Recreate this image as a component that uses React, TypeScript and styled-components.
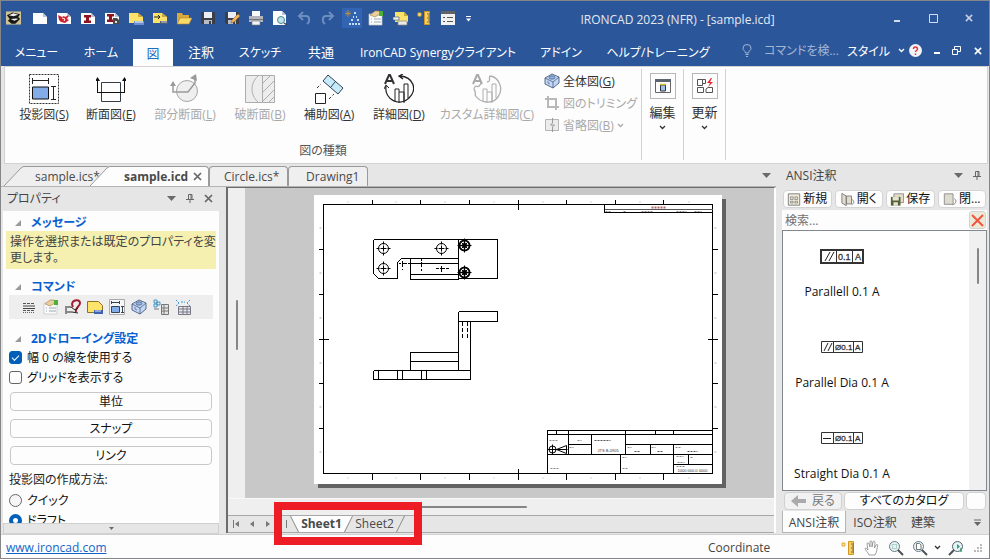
import React from "react";
import styled, { createGlobalStyle } from "styled-components";

const Global = createGlobalStyle`
  * { box-sizing: border-box; }
  body { margin: 0; }
  body, button, input {
    font-family: "Open Sans", "Noto Sans CJK JP", sans-serif;
    font-size: 12px;
    font-feature-settings: "palt";
    color: #333;
  }
  button { background: none; border: 0; padding: 0; margin: 0; white-space: nowrap; }
  svg { display: block; flex: none; }
`;

/* ---------- shell ---------- */

const Shell = styled.div`
  display: flex;
  flex-direction: column;
  height: 100vh;
  overflow: hidden;
  border: 1px solid #84868a;
  background: #e6e6e6;
`;
const TitleBar = styled.header`
  display: flex;
  align-items: center;
  height: 34px;
  flex: none;
  padding-right: 2px;
  background: #2b579a;
`;
const QuickButton = styled.button<{ $active?: boolean }>`
  display: flex;
  align-items: center;
  justify-content: center;
  width: 20px;
  height: 20px;
  margin: 0 2px;
  flex: none;
  background: ${(p) => (p.$active ? "#3165b4" : "none")};
`;
const AppLogo = styled.div`
  padding-left: 5px;
  width: 27px;
  flex: none;
`;
const WindowTitle = styled.h1`
  flex: 1;
  min-width: 0;
  margin: 0;
  padding-top: 3px;
  text-align: center;
  font-size: 12px;
  font-weight: 400;
  color: #e4e9f2;
  white-space: nowrap;
`;
const WindowButton = styled.button<{ $w: number }>`
  display: flex;
  justify-content: center;
  align-items: center;
  align-self: center;
  width: ${(p) => p.$w}px;
  height: 24px;
  flex: none;
`;
const MenuBar = styled.nav`
  display: flex;
  align-items: stretch;
  height: 31px;
  flex: none;
  padding-left: 3px;
  background: #2b579a;
`;
const MenuItem = styled.button<{ $w: number; $active?: boolean }>`
  width: ${(p) => p.$w}px;
  flex: none;
  height: ${(p) => (p.$active ? 27 : 25)}px;
  margin-top: 4px;
  font-size: 13px;
  color: ${(p) => (p.$active ? "#1c6cc0" : "#fff")};
  background: ${(p) => (p.$active ? "#fdfdfd" : "none")};
`;
const KanaItem = styled(MenuItem)`
  font-size: 12px;
`;
const MenuSpacer = styled.div`
  flex: 1;
`;
const CommandSearch = styled.label`
  display: flex;
  align-items: center;
  gap: 12px;
  width: 105px;
  flex: none;
`;
const CommandInput = styled.input`
  width: 80px;
  padding: 0;
  border: 0;
  background: none;
  font-size: 12px;
  &::placeholder { color: #a3b5d3; opacity: 1; }
`;
const StyleMenu = styled.button`
  display: flex;
  align-items: center;
  gap: 8px;
  width: 56px;
  flex: none;
  font-size: 12px;
  color: #fff;
`;

/* ---------- ribbon ---------- */

const Ribbon = styled.section`
  display: flex;
  height: 98px;
  flex: none;
  margin: 0 1px 0 3px;
  border: 1px solid #d2d2d2;
  background: #fdfdfd;
`;
const ViewGroup = styled.div`
  display: flex;
  flex-direction: column;
  width: 636px;
  flex: none;
`;
const GroupTools = styled.div`
  display: flex;
  padding: 7px 0 0 5px;
`;
const GroupLabel = styled.div`
  padding-top: 1px;
  text-align: center;
  font-size: 12px;
  line-height: 18px;
  color: #555;
`;
const BigTool = styled.button<{ $w: number }>`
  display: flex;
  flex-direction: column;
  align-items: center;
  gap: 2px;
  width: ${(p) => p.$w}px;
  height: 67px;
  flex: none;
  padding-top: 0;
  font-size: 12px;
  line-height: 18px;
  color: #333;
  &:disabled { color: #a9a9a9; }
`;
const SmallTools = styled.div`
  display: flex;
  flex-direction: column;
  margin: -4px 0 0 4px;
`;
const SmallTool = styled.button`
  display: flex;
  align-items: center;
  gap: 3px;
  height: 22px;
  font-size: 12px;
  color: #333;
  &:disabled { color: #a9a9a9; }
`;
const DropTool = styled.button`
  display: flex;
  flex-direction: column;
  align-items: center;
  width: 42px;
  flex: none;
  margin: 2px 0 3px;
  padding-top: 4px;
  gap: 4px;
  border-left: 1px solid #d2d2d2;
  font-size: 13px;
  line-height: 18px;
`;
const DropFace = styled.span`
  display: flex;
  align-items: center;
  justify-content: center;
  width: 26px;
  height: 26px;
  border: 1px solid #b8b8b8;
`;
const RibbonEnd = styled.div`
  margin: 2px 0 3px;
  border-left: 1px solid #d2d2d2;
`;

/* ---------- work area ---------- */

const Body = styled.main`
  display: flex;
  flex: 1;
  min-height: 0;
`;
const WorkArea = styled.div`
  display: flex;
  flex-direction: column;
  flex: 1;
  min-width: 0;
`;
const DocTabs = styled.div`
  display: flex;
  align-items: flex-end;
  height: 23px;
  flex: none;
  padding: 0 5px 0 3px;
  border-bottom: 1px solid #b4b4b4;
`;
const DocTab = styled.button<{ $w: number; $active?: boolean; $slant?: boolean }>`
  display: flex;
  align-items: center;
  justify-content: space-between;
  position: relative;
  width: ${(p) => p.$w}px;
  height: 20px;
  flex: none;
  margin-left: ${(p) => (p.$slant ? 20 : 0)}px;
  padding: 0 6px 0 ${(p) => (p.$slant && !p.$active ? 11 : 14)}px;
  border: 1px solid #9a9a9a;
  border-left-width: ${(p) => (p.$slant ? 0 : 1)}px;
  border-bottom: 0;
  border-radius: ${(p) => (p.$slant ? 0 : 4)}px 4px 0 0;
  background: ${(p) => (p.$active ? "#fdfdfd" : "#efefef")};
  font-weight: ${(p) => (p.$active ? 700 : 400)};
  color: #4a4a4a;
  & + & { margin-left: ${(p) => (p.$slant ? 2 : 0)}px; }
`;
const Slant = styled.svg`
  position: absolute;
  right: 100%;
  top: -1px;
`;
const TabsMenu = styled.button`
  margin-left: auto;
  align-self: center;
`;
const Panes = styled.div`
  display: flex;
  flex: 1;
  min-height: 0;
`;

/* ---------- properties ---------- */

const Properties = styled.aside`
  display: flex;
  flex-direction: column;
  width: 216px;
  flex: none;
  margin: 0 7px 0 2px;
`;
const PanelHead = styled.div`
  display: flex;
  align-items: center;
  gap: 10px;
  height: 24px;
  flex: none;
  padding: 0 6px 2px 4px;
`;
const PanelTitle = styled.h2`
  flex: 1;
  margin: 0;
  font-size: 12px;
  font-weight: 400;
  color: #444;
`;
const PropBody = styled.div`
  flex: 1;
  min-height: 0;
  overflow: hidden;
  background: #fdfdfd;
`;
const SectionHead = styled.h3<{ $gap: number }>`
  display: flex;
  align-items: center;
  gap: 9px;
  height: 20px;
  margin: ${(p) => p.$gap}px 0 0;
  padding: 3px 0 0 12px;
  font-size: 12px;
  line-height: 17px;
  font-weight: 700;
  color: #0a5fd0;
`;
const Message = styled.p`
  margin: 0 3px;
  height: 38px;
  padding: 3px 0 0 4px;
  line-height: 16px;
  white-space: nowrap;
  color: #444;
  background: #f5f0b0;
`;
const CommandStrip = styled.div`
  display: flex;
  align-items: center;
  height: 24px;
  margin: 0 6px;
  padding-left: 9px;
  background: #eee;
`;
const StripButton = styled.button`
  display: flex;
  justify-content: center;
  width: 22px;
`;
const Option = styled.label`
  display: flex;
  align-items: center;
  gap: 5px;
  height: 20px;
  padding-left: 6px;
  color: #111;
`;
const Check = styled.input`
  appearance: none;
  width: 13px;
  height: 13px;
  margin: 0;
  border: 1px solid #666;
  border-radius: 3px;
  background: #fdfdfd;
  &:checked {
    border-color: #005fb8;
    background: #005fb8;
  }
  &:checked::after {
    content: "";
    display: block;
    width: 6px;
    height: 3px;
    margin: 3px auto 0;
    border: solid #fff;
    border-width: 0 0 1px 1px;
    transform: rotate(-45deg);
  }
`;
const RadioDot = styled.input`
  appearance: none;
  width: 13px;
  height: 13px;
  margin: 0;
  border: 1px solid #666;
  border-radius: 50%;
  background: #f6f6f6;
  &:checked {
    border: 4px solid #005fb8;
    background: #fff;
  }
`;
const ButtonStack = styled.div`
  display: flex;
  flex-direction: column;
  gap: 8px;
  padding: 5px 7px;
`;
const WideButton = styled.button`
  height: 19px;
  border: 1px solid #c8c8c8;
  border-radius: 4px;
  background: #fdfdfd;
  line-height: 16px;
  color: #111;
`;
const FieldTitle = styled.div`
  height: 20px;
  padding-left: 6px;
  line-height: 20px;
  color: #222;
`;
const MoreStrip = styled.button`
  display: flex;
  align-items: center;
  justify-content: center;
  height: 11px;
  flex: none;
  border: 1px solid #d0d0d0;
  background: #e6e6e6;
`;

/* ---------- drawing view ---------- */

const DrawingView = styled.section`
  position: relative;
  display: flex;
  flex-direction: column;
  flex: 1;
  min-width: 0;
  margin-bottom: 1px;
  border: solid #6c6c6c;
  border-width: 1px 0 0 2px;
  border-right: 2px solid #fdfdfd;
`;
const ViewRow = styled.div`
  display: flex;
  flex: 1;
  min-height: 0;
`;
const SideScroll = styled.div`
  display: flex;
  justify-content: center;
  align-items: flex-start;
  width: 17px;
  flex: none;
  padding-top: 112px;
  background: #efefef;
`;
const Thumb = styled.span<{ $w: number; $h: number }>`
  display: block;
  width: ${(p) => p.$w}px;
  height: ${(p) => p.$h}px;
  border-radius: 1px;
  background: #868686;
`;
const Canvas = styled.div`
  flex: 1;
  min-width: 0;
  overflow: hidden;
  padding: 7px 0 0 69px;
  background: #c8c8c8;
`;
const Sheet = styled.svg`
  background: #fff;
  box-shadow: 4px 4px 0 #636363;
`;
const BottomScroll = styled.div`
  display: flex;
  align-items: center;
  height: 17px;
  flex: none;
  padding-left: 190px;
  border-top: 1px solid #f8f8f8;
  background: #efefef;
`;
const SheetBar = styled.div`
  display: flex;
  height: 18px;
  flex: none;
  border: solid #a8a8a8;
  border-width: 1px 0;
`;
const SheetNav = styled.div`
  display: flex;
  align-items: center;
  width: 62px;
  flex: none;
`;
const NavButton = styled.button`
  display: flex;
  justify-content: center;
  width: 16px;
  flex: none;
`;
const SheetTab = styled.button<{ $w: number; $active?: boolean }>`
  display: flex;
  align-items: center;
  justify-content: space-between;
  width: ${(p) => p.$w}px;
  flex: none;
  font-weight: ${(p) => (p.$active ? 700 : 400)};
  line-height: 16px;
  color: #4a4a4a;
`;
const TabFace = styled.span<{ $active?: boolean }>`
  flex: 1;
  height: 16px;
  background: ${(p) => (p.$active ? "#fdfdfd" : "none")};
`;
const Highlight = styled.div`
  position: absolute;
  left: 46px;
  bottom: -12px;
  width: 148px;
  height: 43px;
  border: 8px solid #ee1c25;
  pointer-events: none;
`;

/* ---------- catalog ---------- */

const Catalog = styled.aside`
  display: flex;
  flex-direction: column;
  width: 205px;
  flex: none;
  margin: 0 2px 0 6px;
`;
const CatalogButtons = styled.div`
  display: flex;
  gap: 3px;
  padding: 2px 1px 2px;
  height: 22px;
  flex: none;
`;
const CatalogButton = styled.button`
  display: flex;
  align-items: center;
  justify-content: center;
  gap: 2px;
  flex: 1;
  height: 18px;
  border: 1px solid #d4d4d4;
  border-radius: 4px;
  background: #fdfdfd;
  font-size: 12px;
  line-height: 16px;
  color: #111;
`;
const SearchRow = styled.div`
  display: flex;
  align-items: center;
  height: 20px;
  flex: none;
  padding: 0 1px 0 3px;
  background: #fdfdfd;
`;
const SearchInput = styled.input`
  flex: 1;
  min-width: 0;
  padding: 0;
  border: 0;
  background: none;
  &::placeholder { color: #707070; opacity: 1; }
`;
const ClearButton = styled.button`
  display: flex;
  align-items: center;
  justify-content: center;
  width: 17px;
  height: 18px;
  border: 1px solid #d2d2d2;
  border-radius: 3px;
  background: #ece9d8;
`;
const ListBox = styled.div`
  display: flex;
  flex: 1;
  min-height: 0;
  border: 1px solid #828790;
  background: #fff;
`;
const ItemList = styled.ul`
  flex: 1;
  margin: 0;
  padding: 18px 0 0;
  list-style: none;
  overflow: hidden;
`;
const Item = styled.li`
  display: flex;
  flex-direction: column;
  align-items: center;
  gap: 19px;
  width: 118px;
  height: 91px;
  line-height: 18px;
  white-space: nowrap;
  color: #111;
`;
const ListScroll = styled.div`
  display: flex;
  justify-content: center;
  width: 17px;
  padding-top: 17px;
  background: #f0f0f0;
`;
const CatalogNav = styled.div`
  display: flex;
  gap: 2px;
  height: 20px;
  flex: none;
  padding: 1px 0 1px 2px;
`;
const NavAction = styled.button<{ $w: number }>`
  display: flex;
  align-items: center;
  justify-content: center;
  gap: 6px;
  width: ${(p) => p.$w}px;
  height: 18px;
  border: 1px solid #d0d0d0;
  border-radius: 4px;
  background: #fdfdfd;
  line-height: 16px;
  color: #111;
  &:disabled { background: #f2f2f2; color: #777; }
`;
const CatalogTabs = styled.div`
  display: flex;
  height: 23px;
  flex: none;
`;
const CatalogTab = styled.button<{ $w: number; $active?: boolean }>`
  width: ${(p) => p.$w}px;
  flex: none;
  height: 22px;
  border: solid ${(p) => (p.$active ? "#b4b4b4" : "transparent")};
  border-width: 0 1px 1px;
  background: ${(p) => (p.$active ? "#fdfdfd" : "none")};
  color: #444;
`;

/* ---------- status ---------- */

const StatusBar = styled.footer`
  display: flex;
  align-items: center;
  height: 24px;
  flex: none;
  padding: 2px 1px 0 5px;
  border-top: 1px solid #d0d0d0;
  background: #fdfdfd;
`;
const SiteLink = styled.a`
  flex: 1;
  color: #1464c8;
`;
const Coordinate = styled.span`
  width: 127px;
  color: #444;
`;
const StatusButton = styled.button<{ $w: number }>`
  display: flex;
  justify-content: center;
  width: ${(p) => p.$w}px;
  flex: none;
`;

/* ---------- icons ---------- */

type IconProps = { w?: number; h?: number; vb?: string; children: React.ReactNode };
const Icon = ({ w = 16, h = w, vb, children }: IconProps) => (
  <svg width={w} height={h} viewBox={vb ?? `0 0 ${w} ${h}`} fill="none" aria-hidden="true">
    {children}
  </svg>
);
const Down = ({ c = "#6a6a6a", w = 9 }: { c?: string; w?: number }) => (
  <Icon w={w} h={5} vb="0 0 9 5"><path d="M0 0H9L4.500 5Z" fill={c} /></Icon>
);
const Chevron = ({ c = "#333" }: { c?: string }) => (
  <Icon w={7} h={5}><path d="M1 1l2.500 2.500L6 1" stroke={c} strokeWidth="1.300" /></Icon>
);
const Cross = ({ c = "#666", w = 9 }: { c?: string; w?: number }) => (
  <Icon w={w} h={w} vb="0 0 9 9"><path d="M1 1l7 7M8 1l-7 7" stroke={c} strokeWidth="1.700" /></Icon>
);
const Pin = () => (
  <Icon w={8} h={10}><path d="M2.500 6V1.500H6V6M5 1v5M0 6.500H8M4 6.500V10" stroke="#666" /></Icon>
);
const page = <path d="M1 3h10l4 4v7H1Z" fill="#fdfdfd" />;
const fold = <path d="M11 3v4h4Z" fill="#b8c4d8" />;
const Ruler = () => (
  <Icon>
    <path d="M8.500 1.500h5v13h-5Z" fill="#f5cf6a" stroke="#cf9722" />
    <path d="M11 4h3M12 6h2M11 8h3M12 10h2M11 12h3" stroke="#8a661a" />
    <path d="M2 3h3v3H2Z" stroke="#e0ab2e" fill="#fbe7ac" />
  </Icon>
);
const Floppy = ({ pen }: { pen?: boolean }) => (
  <Icon>
    <path d="M1 2h13l1 1v11H2l-1-1Z" fill="#3b3e46" />
    <path d="M4 2h8v6H4Z" fill="#e9eef5" />
    <path d="M4 10h8v4H4Z" fill="#b7bcc7" />
    <path d="M9 11h2v3H9Z" fill="#3b3e46" />
    {pen && <path d="M7 13l1-3 6-6 2 2-6 6Z" fill="#f3b45b" stroke="#8b6a3f" strokeWidth=".6" />}
  </Icon>
);
const HandSheet = () => (
  <Icon>
    <path d="M1 4h13v11H1Z" fill="#fbfbfb" stroke="#c4c4c4" strokeWidth=".7" />
    <path d="M3 9h1M6 9h7M3 12h1M6 12h7" stroke="#9aa7b5" />
    <path d="M2 5l5-4h4l1 3-5 3Z" fill="#ecce9c" stroke="#9c7d45" strokeWidth=".6" />
    <path d="M11 1h4v5h-4Z" fill="#4cb036" />
  </Icon>
);
const CubeIcon = () => (
  <Icon>
    <path d="M1 5l7-4 7 3v6l-6 5-8-4Z" fill="#c3d8f7" stroke="#4a5c7a" strokeWidth=".9" />
    <path d="M1 5l8 4 6-5M9 9v6" stroke="#4a5c7a" strokeWidth=".8" />
    <ellipse cx="8" cy="4.500" rx="3" ry="1.700" fill="#8fb0e2" stroke="#4a5c7a" strokeWidth=".7" />
    <path d="M4 8v2l2 1" stroke="#4a5c7a" strokeWidth=".7" />
  </Icon>
);
const Lens = ({ extra }: { extra?: React.ReactNode }) => (
  <Icon>
    <circle cx="6.500" cy="6.500" r="5" fill="#e3f3f6" stroke="#6b7d86" />
    {extra}
    <path d="M10 10l5 5" stroke="#4a5257" strokeWidth="2" />
  </Icon>
);

const quickIcons: { label: string; active?: boolean; icon: React.ReactNode }[] = [
  { label: "新規", icon: <Icon>{page}{fold}</Icon> },
  { label: "新規シーン", icon: <Icon>{page}{fold}<path d="M2 5l4 2 2-1 1 1 4-2-2 4 2 1-4 3-4-1-2-2Z" fill="#d3202c" /><path d="M6 8l3 1-1 2" stroke="#fff" /></Icon> },
  { label: "新規図面", icon: <Icon>{page}{fold}<path d="M4 5h7v2.500H9v3h2V13H4v-2.500h2v-3H4Z" fill="#8d1420" /></Icon> },
  { label: "図面設定", icon: <Icon>{page}{fold}<path d="M3 4h7v2.500H8v3h2V12H3V9.500h2v-3H3Z" fill="#8d1420" /><path d="M9 8h4l2 2v4H9Z" fill="#4a4a4a" /><path d="M11 11h2v2h-2Z" fill="#ddd" /></Icon> },
  { label: "シート", icon: <Icon><path d="M1 3h9l5 4v6H1Z" fill="#fbe26b" /><path d="M10 3v4h5Z" fill="#caa93a" /><path d="M6 11h10v4H6Z" fill="#6f8fd0" /><path d="M8 11v2M10 11v2M12 11v2M14 11v2" stroke="#fff" /></Icon> },
  { label: "シート挿入", icon: <Icon><path d="M1 3h9l5 4v6H1Z" fill="#fbe26b" /><path d="M10 3v4h5Z" fill="#caa93a" /><path d="M2 7h6M6 5l2 2-2 2" stroke="#222" /><path d="M8 11h8v3H8Z" fill="#505b70" /><path d="M10 11v2M12 11v2M14 11v2" stroke="#cdd6ea" /></Icon> },
  { label: "開く", icon: <Icon><path d="M1 3h5l1 2h6v3H4l-3 6Z" fill="#d9a93a" /><path d="M4 8h12l-3 6H1Z" fill="#fbd968" stroke="#b3862a" strokeWidth=".6" /></Icon> },
  { label: "保存", icon: <Floppy /> },
  { label: "名前を付けて保存", icon: <Floppy pen /> },
  { label: "印刷", icon: <Icon><path d="M4 1h8v5H4Z" fill="#fdfdfd" /><path d="M1 6h14v6H1Z" fill="#b3b6bb" /><path d="M1 9h14v1H1Z" fill="#75797f" /><path d="M4 11h8v4H4Z" fill="#f3f3f3" stroke="#777" strokeWidth=".6" /></Icon> },
  { label: "印刷プレビュー", icon: <Icon><path d="M1 1h9l4 4v10H1Z" fill="#fdfdfd" /><path d="M10 1v4h4Z" fill="#b8c4d8" /><circle cx="9" cy="10" r="3.500" fill="#bfe4ea" stroke="#4b8794" /><path d="M12 13l3 2" stroke="#33474c" strokeWidth="1.500" /></Icon> },
  { label: "元に戻す", icon: <Icon><path d="M3 6h7c4 0 4 6 1 8M7 2L3 6l4 4" stroke="#6d8dc1" strokeWidth="2" /></Icon> },
  { label: "やり直し", icon: <Icon><path d="M13 6H6c-4 0-4 6-1 8M9 2l4 4-4 4" stroke="#6d8dc1" strokeWidth="2" /></Icon> },
  { label: "ツリー", active: true, icon: <Icon><path d="M4 0v7M1 3.500h6M2 1.500l4 4M6 1.500l-4 4" stroke="#c4903c" strokeWidth=".8" /><path d="M10 2h2v2h-2ZM9 6h1v2H9ZM12 6h1v2h-1ZM7 9h2v2H7ZM13 9h2v2h-2ZM5 13h2v2H5ZM8 13h2v2H8ZM11 13h2v2h-2ZM14 13h2v2h-2Z" fill="#c9dcf5" /></Icon> },
  { label: "プロパティ", icon: <HandSheet /> },
  { label: "図枠", icon: <Icon><path d="M3 2h9l4 4v6H3Z" fill="#fbe26b" /><path d="M12 2v4h4Z" fill="#caa93a" /><path d="M1 7h6v3H1Z" fill="#f4f4f4" stroke="#4c6378" strokeWidth=".7" /><path d="M6 11h9v4H6Z" fill="#ecebe2" stroke="#888" strokeWidth=".7" /></Icon> },
  { label: "寸法", icon: <Ruler /> },
  { label: "一覧", icon: <Icon><path d="M1 1h14v14H1Z" fill="#f1f1f1" /><path d="M1 1h14v3H1Z" fill="#636363" /><path d="M3 7.500h2M3 11.500h2M7 7.500h6M7 11.500h6" stroke="#555" /></Icon> },
];

const bigTools: { label: string; k: string; w: number; off?: boolean; icon: React.ReactNode }[] = [
  { label: "投影図", k: "S", w: 68, icon: <Icon w={30}><path d="M.5.5h29v29H.5Z" stroke="#333" strokeDasharray="2 1" /><path d="M3.500 13h16v12h-16Z" fill="#82ade8" stroke="#111" /><path d="M3.500 4v6M19.500 4v6M4 6.500h15M22 12.500h5M22 25.500h5M24.500 12v13" stroke="#222" /></Icon> },
  { label: "断面図", k: "E", w: 66, icon: <Icon w={30}><path d="M5.500 8.500h19v19h-19Z" stroke="#333b48" /><path d="M1 18.500h28" stroke="#111" /><path d="M1.500 18V5M28.500 18V5" stroke="#111" /><path d="M-1 7L1.500 3 4 7ZM26 7l2.500-4L31 7Z" fill="#111" /></Icon> },
  { label: "部分断面", k: "L", w: 82, off: true, icon: <Icon w={30}><circle cx="17" cy="17" r="10.500" fill="#efefef" stroke="#a6a6a6" /><path d="M3 9v9h15l7-9V4" stroke="#9a9a9a" strokeWidth="1.500" /><path d="M0 12l3-5 3 5ZM20 4l6-4 1 7Z" fill="#9a9a9a" /></Icon> },
  { label: "破断面", k: "B", w: 68, off: true, icon: <Icon w={30}><path d="M.5 1.500h29v27H.5Z" fill="#ededed" stroke="#adadad" /><path d="M13 2C5 9 5 21 13 28M17.500 2v26M18 9l7-7M18 18L29 7M18 27l11-11M24 28l5-5" stroke="#adadad" /></Icon> },
  { label: "補助図", k: "A", w: 70, icon: <Icon w={30}><path d="M14 1l15 13-5 6L9 7Z" fill="#c6ebfb" stroke="#2d4352" /><path d="M16.500 13.500l5-6" stroke="#2d4352" /><path d="M1.500 19.500h10v10h-10Z" fill="#fff" stroke="#222" /><path d="M3 14l4-4M15 25l5-5" stroke="#333" strokeDasharray="3 2" /></Icon> },
  { label: "詳細図", k: "D", w: 70, icon: <Icon w={30}><path d="M2 12c-2 14 14 21 23 12S29 3 16 2M19 0l-4 2 4 3" stroke="#222" strokeWidth="1.300" /><path d="M11 28V15h4v14M15 18h5v11M20 28V10h4v14" stroke="#222" /><path d="M0 15l2-4 3 3" stroke="#222" /><path d="M1 10L5 1h1l4 9M2.500 7h6" stroke="#333" strokeWidth="2" /></Icon> },
  { label: "カスタム詳細図", k: "C", w: 106, off: true, icon: <Icon w={30}><path d="M4 12c-5 3 1 5-1 9 5 8 17 10 23 2S27 3 18 2c-2 3 2 5-3 6M4 12c3 2 5-2 5-4" stroke="#aeaeae" strokeWidth="1.300" /><path d="M11 28V15h4v14M15 18h5v11M20 28V10h4v14" stroke="#aeaeae" /><path d="M1 10L5 1h1l4 9M2.500 7h6" stroke="#aaa" strokeWidth="2" /></Icon> },
];

const commandIcons = [
  { label: "線種", icon: <Icon><path d="M2 4.500h12M2 11.500h12" stroke="#555" strokeDasharray="3 1" /><path d="M2 7h12M2 9.500h12" stroke="#444" /><path d="M2 13.500h12" stroke="#666" strokeDasharray="1 1" /></Icon> },
  { label: "プロパティ", icon: <HandSheet /> },
  { label: "接続", icon: <Icon><path d="M8 8C4 1 15-1 15 4c0 4-5 4-4 9" stroke="#a01c30" strokeWidth="2" /><path d="M1 7v8M2 8h4l4 3 3-2M2 13h5l6 1" stroke="#222" /></Icon> },
  { label: "シート", icon: <Icon><path d="M.5 2.500h11l4 4v7H.5Z" fill="#ffe36b" stroke="#8a7426" /><path d="M7 11h9v4H7Z" fill="#3e62b0" /><path d="M9 11v2M11 11v2M13 11v2" stroke="#dfe8fb" /></Icon> },
  { label: "標準投影図", icon: <Icon><path d="M.5.5h15v15H.5Z" fill="#f6f6f6" stroke="#aaa" /><path d="M2.500 7.500h8v6h-8Z" fill="#82ade8" stroke="#345" /><path d="M2 3.500h9M2.500 2v3M10.500 2v3M13.500 7v7M12 7.500h3M12 13.500h3" stroke="#345" /></Icon> },
  { label: "全体図", icon: <CubeIcon /> },
  { label: "部品表", icon: <Icon><path d="M1 1h3v3H1ZM4 3h3v3H4ZM1 5h3v3H1Z" stroke="#2b7fb4" fill="#d7effb" strokeWidth=".8" /><path d="M8.500 5.500h7v10h-7Z" fill="#e4e4e4" stroke="#777" /><path d="M8 9h8M8 12h8M11 6v9M1 10h5" stroke="#777" /></Icon> },
  { label: "表", icon: <Icon><path d="M1 1l3 3M15 1l-3 3M6 3h4M1 7l3-3M15 7l-3-3" stroke="#3f97cf" strokeDasharray="2 1" /><path d="M3.500 7.500h12v8h-12Z" fill="#e9e9e9" stroke="#778" /><path d="M4 10h11M4 13h11M8 8v7M12 8v7" stroke="#778" /></Icon> },
];

/* ---------- sheet drawing ---------- */

const Hole = ({ x, y }: { x: number; y: number }) => (
  <g><circle cx={x} cy={y} r="5" /><path d={`M${x - 7} ${y}h14M${x} ${y - 7}v14`} strokeDasharray="3 1 6 1 3" /></g>
);
const Bolt = ({ x, y }: { x: number; y: number }) => (
  <g>
    <circle cx={x} cy={y} r="5" strokeWidth="2" />
    <circle cx={x} cy={y} r="2.500" />
    <path d={`M${x - 7} ${y}h14M${x} ${y - 7}v14M${x - 3} ${y - 3}l6 6M${x + 3} ${y - 3}l-6 6`} />
  </g>
);
const topTicks = [372, 420, 469, 518, 566, 615, 663];
const sideTicks = [249, 294, 339, 383, 428];
const marks = [347, 395, 444, 493, 542, 590, 639, 688];

const SheetDrawing = () => (
  <Sheet width="408" height="289" viewBox="313.500 194.500 408 289" fill="none" role="img" aria-label="Sheet1">
    <g stroke="#000" shapeRendering="crispEdges">
      <path d="M323 204H712V473H323Z" />
      {topTicks.map((x) => <path key={x} d={x === 518 ? `M${x} 199v10M${x} 468v11` : `M${x} 199v5M${x} 473v6`} />)}
      {sideTicks.map((y) => <path key={y} d={y === 339 ? `M318 ${y}h10M707 ${y}h10` : `M318 ${y}h5M712 ${y}h5`} />)}
      <path d="M604 204V212H712" />
      <path d="M604 209H712" stroke="#555" />
      <path d="M547 473V430H712M547 434H712M568 444H591M625 444H712M547 454H712M673 464H712" />
      <path d="M556 430v4M568 430v24M591 434v20M625 430v24M655 430v4M673 430v4M650 444v10M673 444v29M620 454v19M688 454v10" />
      <path d="M373 239H497V278H458M458 239V279M373 239V273L378 278H397V262L401 258H458M410 258V279H458M410 263H458M410 274H458" />
      <path d="M458 311H497V321H458M458 311V370M470 321V379M410 370V352H458M410 361H458M373 370H470M373 370V379H470M378 370v9M397 370v9M402 370v9M421 370v9M426 370v9" />
      <path d="M462 321v18M467 321v18" strokeDasharray="4 2" />
      <path d="M398 263h2M401 263h5M407 263h2M402 260v6M402 268v1M421 257v3M421 261v5M421 268v2M419 263h5M435 268h3M439 268h5M445 268h3M441 265v6" />
    </g>
    <g stroke="#000">
      <Hole x={383} y={248} /><Hole x={441} y={248} /><Hole x={383} y={268} />
      <Bolt x={464} y={245} /><Bolt x={464} y={272} />
      <circle cx="552" cy="449" r="3.500" />
      <path d="M547 449h20M552 444v10M556 449l10-4v8Z" />
    </g>
    <g stroke="#8a8a8a" strokeDasharray="2 1">
      <path d="M549 440h8M577 440h4M569 447h4M627 447h4M651 447h4M675 447h6M622 457h4M690 457h2M676 456h7M677 462h7M676 466h8M550 468h9M622 468h6M605 211h6M623 211h3M641 211h12M676 211h10M694 211h7" />
      <path d="M594 440h16M634 451h6M657 451h6M687 451h10" stroke="#555" />
      <path d="M651 207h15" stroke="#a66" strokeWidth="2" />
    </g>
    <text x="597" y="451" fontSize="4" fill="#333" fontFamily="Liberation Sans">JTS B-0905</text>
    <text x="677" y="471" fontSize="4" fill="#333" fontFamily="Liberation Sans">1000 000.0 0000</text>
    <g fill="#a3b5b0">
      {marks.map((x) => <path key={x} d={`M${x} 201h1v1h-1ZM${x} 477h1v1h-1Z`} />)}
      {[227, 272, 317, 362, 406, 451].map((y) => <path key={y} d={`M319 ${y}h2v1h-2ZM714 ${y}h2v1h-2Z`} />)}
    </g>
  </Sheet>
);

const Tolerance = ({ kind }: { kind: "par" | "parDia" | "straight" }) => {
  const big = kind === "par";
  return (
    <Icon w={44} h={15}>
      <path d={big ? "M1 1h42v13H1Z" : "M1.500 1.500h41v11h-41Z"} stroke="#333" strokeWidth={big ? 2 : 1} fill="#fff" />
      <path d={big ? "M16.500 1v13M32.500 1v13" : "M13.500 2v11M33.500 2v11"} stroke="#333" />
      {kind === "straight"
        ? <path d="M3 7.500h8" stroke="#222" />
        : <path d={big ? "M5 12l5-9M9 12l5-9" : "M4 11l4-8M8 11l4-8"} stroke="#222" />}
      <text x={big ? 18 : 15} y={big ? 11 : 10} fontSize={big ? 9 : 8} stroke="#333" strokeWidth=".3" fill="#333" fontFamily="Liberation Sans">{big ? "0.1" : "Ø0.1"}</text>
      <text x="35" y={big ? 11 : 10} fontSize={big ? 9 : 8} stroke="#333" strokeWidth=".3" fill="#333" fontFamily="Liberation Sans">A</text>
    </Icon>
  );
};

const Fold = () => <Icon w={7} h={6}><path d="M6 0V6H0Z" fill="#999" /></Icon>;
const Key = ({ k }: { k: string }) => <>(<u>{k}</u>)</>;

export default function App() {
  return (
    <Shell>
      <Global />
      <TitleBar>
        <AppLogo>
          <Icon w={15} h={16} vb="0 0 16 16"><path d="M0 1h16v14H0Z" fill="#cfc394" /><path d="M1 5l6-3 8 2-2 3 2 2-5 5H6L2 11l2-2Z" fill="#16181b" /><path d="M3 5l5-2 5 1.500L8 6ZM5 9l6-.5 2 .5-4 2Z" fill="#f1f1ea" /></Icon>
        </AppLogo>
        {quickIcons.map((q) => (
          <QuickButton key={q.label} aria-label={q.label} $active={q.active}>{q.icon}</QuickButton>
        ))}
        <WindowButton $w={16} aria-label="カスタマイズ"><Icon w={7} h={7}><path d="M1 1.500h5" stroke="#fff" /><path d="M1 3.500h5L3.500 6.500Z" fill="#fff" /></Icon></WindowButton>
        <WindowTitle>IRONCAD 2023 (NFR) - [sample.icd]</WindowTitle>
        <WindowButton $w={36} aria-label="最小化"><Icon w={9} h={9}><path d="M1 7h6" stroke="#d5dcea" strokeWidth="2" /></Icon></WindowButton>
        <WindowButton $w={36} aria-label="最大化"><Icon w={9} h={9}><path d="M.5.5h8v8h-8Z" stroke="#d5dcea" /></Icon></WindowButton>
        <WindowButton $w={36} aria-label="閉じる"><Cross c="#c6cfdf" w={8} /></WindowButton>
      </TitleBar>
      <MenuBar>
        <KanaItem $w={65}>メニュー</KanaItem>
        <KanaItem $w={64}>ホーム</KanaItem>
        <MenuItem $w={40} $active>図</MenuItem>
        <MenuItem $w={56}>注釈</MenuItem>
        <KanaItem $w={62}>スケッチ</KanaItem>
        <MenuItem $w={60}>共通</MenuItem>
        <KanaItem $w={174}>IronCAD Synergyクライアント</KanaItem>
        <KanaItem $w={72}>アドイン</KanaItem>
        <KanaItem $w={122}>ヘルプ/トレーニング</KanaItem>
        <MenuSpacer />
        <CommandSearch>
          <Icon w={10} h={13}><path d="M3.500 9C3.500 7 1 6.500 1 4.200a4 3.700 0 0 1 8 0C9 6.500 6.500 7 6.500 9ZM3.500 10.500h3M4 12.500h2" stroke="#a3b5d3" /></Icon>
          <CommandInput aria-label="コマンドを検索" placeholder="コマンドを検..." />
        </CommandSearch>
        <StyleMenu>スタイル<Chevron c="#fff" /></StyleMenu>
        <WindowButton $w={24} aria-label="ヘルプ">
          <Icon w={13} h={13}><circle cx="6.500" cy="6.500" r="6.500" fill="#f1f3f7" /><path d="M4.500 5c0-3 4-2.500 4 0 0 1.500-2 1.500-2 3M6.500 9.500v1.500" stroke="#e6343c" strokeWidth="1.500" /></Icon>
        </WindowButton>
        <WindowButton $w={20} aria-label="文書を最小化"><Icon w={8} h={9}><path d="M1 7h6" stroke="#fff" strokeWidth="2" /></Icon></WindowButton>
        <WindowButton $w={19} aria-label="元のサイズに戻す"><Icon w={9} h={9}><path d="M2.500 3V.5h6v5H6M.5 3.500h5v5h-5Z" stroke="#fff" /></Icon></WindowButton>
        <WindowButton $w={23} aria-label="文書を閉じる"><Cross c="#fff" w={8} /></WindowButton>
      </MenuBar>

      <Ribbon>
        <ViewGroup>
          <GroupTools>
            {bigTools.map((t) => (
              <BigTool key={t.label} $w={t.w} disabled={t.off}>{t.icon}<span>{t.label}<Key k={t.k} /></span></BigTool>
            ))}
            <SmallTools>
              <SmallTool><CubeIcon /><span>全体図<Key k="G" /></span></SmallTool>
              <SmallTool disabled><Icon><path d="M4 1v11h11M1 4h11v11" stroke="#b8b8b8" strokeWidth="2" /></Icon>図のトリミング</SmallTool>
              <SmallTool disabled><Icon><path d="M1.500 2.500h13v11h-13Z" fill="#ececec" stroke="#b5b5b5" /><path d="M8.500 1v5l-2 2h4l-2 2v5" stroke="#999" /></Icon><span>省略図<Key k="B" /></span><Chevron c="#a9a9a9" /></SmallTool>
            </SmallTools>
          </GroupTools>
          <GroupLabel>図の種類</GroupLabel>
        </ViewGroup>
        <DropTool>
          <DropFace><Icon><path d="M.5 1.500h15v13H.5Z" stroke="#666" /><path d="M0 1h16v3H0Z" fill="#5c6470" /><path d="M5.500 7h5v6h-5Z" fill="#9cc3ea" stroke="#334" /><path d="M5 6.500h6" stroke="#d7c22c" strokeWidth="1.500" /></Icon></DropFace>
          <span>編集</span><Chevron />
        </DropTool>
        <DropTool>
          <DropFace><Icon><path d="M.5 1.500h5v6h-5ZM5.500 1.500h3v4h-3ZM.5 9.500h6v5h-6ZM9 14.500V11l2-1.500h4.500v5Z" stroke="#555" /><path d="M14 0l-4 5h3l-2 4 5-5h-3l2-4Z" fill="#e8202a" /></Icon></DropFace>
          <span>更新</span><Chevron />
        </DropTool>
        <RibbonEnd />
      </Ribbon>

      <Body>
        <WorkArea>
          <DocTabs>
            <DocTab $w={86} $slant>
              <Slant width="20" height="20" viewBox="0 0 20 20"><path d="M0 20L17 2Q19 .5 20 .5V20Z" fill="#efefef" /><path d="M0 20L17 2Q19 .5 20 .5" fill="none" stroke="#9a9a9a" /></Slant>
              sample.ics*
            </DocTab>
            <DocTab $w={99} $active $slant>
              <Slant width="20" height="20" viewBox="0 0 20 20"><path d="M0 20L17 2Q19 .5 20 .5V20Z" fill="#fdfdfd" /><path d="M0 20L17 2Q19 .5 20 .5" fill="none" stroke="#9a9a9a" /></Slant>
              sample.icd<Cross />
            </DocTab>
            <DocTab $w={79}>Circle.ics*</DocTab>
            <DocTab $w={80}>&nbsp;Drawing1</DocTab>
            <TabsMenu aria-label="タブ一覧"><Down /></TabsMenu>
          </DocTabs>
          <Panes>
            <Properties>
              <PanelHead>
                <PanelTitle>プロパティ</PanelTitle>
                <button aria-label="メニュー"><Down /></button>
                <button aria-label="固定"><Pin /></button>
                <button aria-label="閉じる"><Cross /></button>
              </PanelHead>
              <PropBody>
                <SectionHead $gap={0}><Fold />メッセージ</SectionHead>
                <Message>操作を選択または既定のプロパティを変<br />更します。</Message>
                <SectionHead $gap={6}><Fold />コマンド</SectionHead>
                <CommandStrip>
                  {commandIcons.map((c) => <StripButton key={c.label} aria-label={c.label}>{c.icon}</StripButton>)}
                </CommandStrip>
                <SectionHead $gap={8}><Fold />2Dドローイング設定</SectionHead>
                <Option><Check type="checkbox" defaultChecked />幅 0 の線を使用する</Option>
                <Option><Check type="checkbox" />グリッドを表示する</Option>
                <ButtonStack>
                  <WideButton>単位</WideButton>
                  <WideButton>スナップ</WideButton>
                  <WideButton>リンク</WideButton>
                </ButtonStack>
                <FieldTitle>投影図の作成方法:</FieldTitle>
                <Option><RadioDot type="radio" name="method" />クイック</Option>
                <Option><RadioDot type="radio" name="method" defaultChecked />ドラフト</Option>
              </PropBody>
              <MoreStrip aria-label="下へ"><Down w={5} /></MoreStrip>
            </Properties>

            <DrawingView>
              <ViewRow>
                <SideScroll><Thumb $w={2} $h={50} /></SideScroll>
                <Canvas><SheetDrawing /></Canvas>
              </ViewRow>
              <BottomScroll><Thumb $w={109} $h={2} /></BottomScroll>
              <SheetBar>
                <SheetNav>
                  <NavButton aria-label="先頭"><Icon w={8} h={8}><path d="M1.500 0v8" stroke="#777" /><path d="M7 1v6L3 4Z" fill="#777" /></Icon></NavButton>
                  <NavButton aria-label="前"><Icon w={8} h={8}><path d="M6 1v6L2 4Z" fill="#777" /></Icon></NavButton>
                  <NavButton aria-label="次"><Icon w={8} h={8}><path d="M2 1v6l4-3Z" fill="#777" /></Icon></NavButton>
                  <NavButton aria-label="末尾"><Icon w={8} h={8}><path d="M6.500 0v8" stroke="#777" /></Icon></NavButton>
                </SheetNav>
                <SheetTab $w={63} $active>
                  <Icon w={9} h={16}><path d="M0 0h9v16Z" fill="#fdfdfd" /><path d="M.5 0L8.500 16" stroke="#888" /></Icon>
                  <TabFace $active>Sheet1</TabFace>
                  <Icon w={9} h={16}><path d="M0 0h9L0 16Z" fill="#fdfdfd" /><path d="M8.500 0L.5 16" stroke="#888" /></Icon>
                </SheetTab>
                <SheetTab $w={52}>
                  <TabFace>Sheet2</TabFace>
                  <Icon w={9} h={16}><path d="M8.500 0L.5 16" stroke="#888" /></Icon>
                </SheetTab>
              </SheetBar>
              <Highlight />
            </DrawingView>
          </Panes>
        </WorkArea>

        <Catalog>
          <PanelHead>
            <PanelTitle>ANSI注釈</PanelTitle>
            <button aria-label="メニュー"><Down /></button>
            <button aria-label="固定"><Pin /></button>
          </PanelHead>
          <CatalogButtons>
            <CatalogButton><Icon w={14} h={15} vb="0 0 16 16"><path d="M1.500 1.500h13v13h-13Z" fill="#efebd8" stroke="#777" /><path d="M4 5h3v3H4ZM9 5h3v3H9ZM4 10h3v2H4ZM9 10h3v2H9Z" stroke="#777" strokeWidth=".8" /></Icon>新規</CatalogButton>
            <CatalogButton><Icon w={14} h={15} vb="0 0 16 16"><path d="M1 1l5 3v11l-5-3ZM6 4h6v9H6Z" fill="#e2ddca" stroke="#777" /><path d="M12 8c4 1 3 5 0 6" stroke="#777" /></Icon>開く</CatalogButton>
            <CatalogButton><Icon w={14} h={15} vb="0 0 16 16"><path d="M4.500 1.500h11v10h-11Z" fill="#e5e0cc" stroke="#888" /><path d="M1 5h11v10H1Z" fill="#596035" /><path d="M3 5h7v4H3ZM4 11h5v4H4Z" fill="#e4e6d4" /></Icon>保存</CatalogButton>
            <CatalogButton><Icon w={14} h={15} vb="0 0 16 16"><path d="M1.500 1.500h10v12h-10Z" fill="#dedbcf" stroke="#888" /><path d="M13 7c3 2 2 6-2 7" stroke="#777" /></Icon>閉...</CatalogButton>
          </CatalogButtons>
          <SearchRow>
            <SearchInput aria-label="検索" placeholder="検索..." />
            <ClearButton aria-label="クリア"><Icon w={13} h={13}><path d="M1 1l11 11M12 1L1 12" stroke="#f0563f" strokeWidth="2" /></Icon></ClearButton>
          </SearchRow>
          <ListBox>
            <ItemList>
              <Item><Tolerance kind="par" />Parallell 0.1 A</Item>
              <Item><Tolerance kind="parDia" />Parallel Dia 0.1 A</Item>
              <Item><Tolerance kind="straight" />Straight Dia 0.1 A</Item>
            </ItemList>
            <ListScroll><Thumb $w={2} $h={36} /></ListScroll>
          </ListBox>
          <CatalogNav>
            <NavAction $w={58} disabled><Icon w={15} h={12}><path d="M0 6l7-6v4h8v4H7v4Z" fill="#aaa" /></Icon>戻る</NavAction>
            <NavAction $w={120}>すべてのカタログ</NavAction>
            <NavAction $w={20} aria-label="次へ" />
          </CatalogNav>
          <CatalogTabs>
            <CatalogTab $w={64} $active>ANSI注釈</CatalogTab>
            <CatalogTab $w={58}>ISO注釈</CatalogTab>
            <CatalogTab $w={38}>建築</CatalogTab>
            <TabsMenu aria-label="カタログ一覧"><Icon w={20} h={8}><path d="M7 1h7" stroke="#666" /><path d="M7 3h7l-3.500 4Z" fill="#666" /></Icon></TabsMenu>
          </CatalogTabs>
        </Catalog>
      </Body>

      <StatusBar>
        <SiteLink href="#ironcad">www.ironcad.com</SiteLink>
        <Coordinate>Coordinate</Coordinate>
        <StatusButton $w={25} aria-label="計測"><Ruler /></StatusButton>
        <StatusButton $w={24} aria-label="パン"><Icon><path d="M5 15C4 12 1 10 1 8.500c1-1 2 0 3 1.500L3 4c0-1.500 1.500-1.500 2 0l1 3V2c0-1.500 1.700-1.500 2 0v5l1-5c.5-1.300 2-1 2 .5L10.500 8 12 5c1-1 2-.5 1.700.7C13 8 13 12 11 15Z" fill="#fff" stroke="#888" strokeWidth=".8" /></Icon></StatusButton>
        <StatusButton $w={24} aria-label="ズーム"><Lens extra={<path d="M4.500 4.500h4v4h-4Z" stroke="#7fae9c" strokeDasharray="1 1" />} /></StatusButton>
        <StatusButton $w={24} aria-label="全体表示"><Lens extra={<path d="M4.500 3.500h3l1.500 1.500v4.500H4.500Z" stroke="#777" fill="#fff" />} /></StatusButton>
        <StatusButton $w={11} aria-label="表示メニュー"><Chevron /></StatusButton>
        <StatusButton $w={25} aria-label="拡大"><Icon><circle cx="9.500" cy="6.500" r="5" fill="#e3f3f6" stroke="#51636c" /><path d="M6 10l-5 5" stroke="#4a5257" strokeWidth="2" /><path d="M9 4l3 2.500L9 9Z" fill="#3b9b74" /><path d="M13 8v4" stroke="#3b9b74" strokeWidth="1.500" /></Icon></StatusButton>
        <StatusButton $w={20} as="span"><Icon w={8} h={8}><path d="M6 0h2v2H6ZM3 3h2v2H3ZM6 3h2v2H6ZM0 6h2v2H0ZM3 6h2v2H3ZM6 6h2v2H6Z" fill="#bbb" /></Icon></StatusButton>
      </StatusBar>
    </Shell>
  );
}
